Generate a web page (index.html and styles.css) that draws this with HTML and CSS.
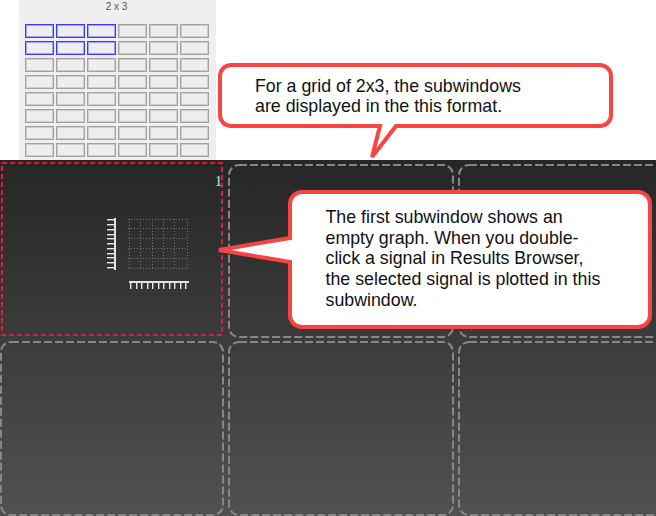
FILE: index.html
```html
<!DOCTYPE html>
<html>
<head>
<meta charset="utf-8">
<title>Subwindow grid</title>
<link rel="stylesheet" href="styles.css">
</head>
<body>
<div class="page">
  <section class="top">
    <div class="layout-panel">
      <div class="layout-title">2 x 3</div>
      <div class="cell-grid">
        <span class="cell sel"></span><span class="cell sel"></span><span class="cell sel"></span><span class="cell"></span><span class="cell"></span><span class="cell"></span>
        <span class="cell sel"></span><span class="cell sel"></span><span class="cell sel"></span><span class="cell"></span><span class="cell"></span><span class="cell"></span>
        <span class="cell"></span><span class="cell"></span><span class="cell"></span><span class="cell"></span><span class="cell"></span><span class="cell"></span>
        <span class="cell"></span><span class="cell"></span><span class="cell"></span><span class="cell"></span><span class="cell"></span><span class="cell"></span>
        <span class="cell"></span><span class="cell"></span><span class="cell"></span><span class="cell"></span><span class="cell"></span><span class="cell"></span>
        <span class="cell"></span><span class="cell"></span><span class="cell"></span><span class="cell"></span><span class="cell"></span><span class="cell"></span>
        <span class="cell"></span><span class="cell"></span><span class="cell"></span><span class="cell"></span><span class="cell"></span><span class="cell"></span>
        <span class="cell"></span><span class="cell"></span><span class="cell"></span><span class="cell"></span><span class="cell"></span><span class="cell"></span>
      </div>
    </div>
  </section>

  <section class="workspace">
    <div class="pane pane-active">
      <svg class="graph" width="84" height="74" viewBox="0 0 84 74">
        <g class="grid-dots">
          <path d="M21 2.5H81M21 11.5H81M21 21.5H81M21 31.5H81M21 41.5H81M21 51.5H81"/>
          <path d="M22.5 2V52M33.5 2V52M45.5 2V52M56.5 2V52M67.5 2V52M80.5 2V52"/>
        </g>
        <path class="axis-shadow" d="M0 3.5H7M0 8.5H7M0 13.5H7M0 18.5H7M0 22.5H7M0 27.5H7M0 32.5H7M0 37.5H7M0 41.5H7M0 46.5H7M0 51.5H7"/>
        <path class="axis" d="M0 2.5H7M0 7.5H7M0 12.5H7M0 17.5H7M0 21.5H7M0 26.5H7M0 31.5H7M0 36.5H7M0 40.5H7M0 45.5H7M0 50.5H7"/>
        <path class="axis-bar" d="M8 1V53"/>
        <path class="axis-bar" d="M22 65H82"/>
        <path class="axis-shadow" d="M24.5 66V72M30.5 66V72M35.5 66V72M41.5 66V72M46.5 66V72M52.5 66V72M57.5 66V72M63.5 66V72M68.5 66V72M74.5 66V72M79.5 66V72"/>
        <path class="axis" d="M23.5 66V72M29.5 66V72M34.5 66V72M40.5 66V72M45.5 66V72M51.5 66V72M56.5 66V72M62.5 66V72M67.5 66V72M73.5 66V72M78.5 66V72"/>
      </svg>
      <span class="pane-num">1</span>
    </div>
    <div class="pane">
      <svg class="pane-border" width="226" height="174"><rect x="1" y="1" width="224" height="172" rx="10"/></svg>
    </div>
    <div class="pane">
      <svg class="pane-border" width="226" height="174"><rect x="1" y="1" width="224" height="172" rx="10"/></svg>
    </div>
    <div class="pane">
      <svg class="pane-border" width="224" height="175"><rect x="1" y="1" width="222" height="173" rx="10"/></svg>
    </div>
    <div class="pane">
      <svg class="pane-border" width="226" height="175"><rect x="1" y="1" width="224" height="173" rx="10"/></svg>
    </div>
    <div class="pane">
      <svg class="pane-border" width="226" height="175"><rect x="1" y="1" width="224" height="173" rx="10"/></svg>
    </div>

    <svg class="selection" width="222" height="174"><rect x="1" y="1" width="220" height="172"/></svg>
  </section>

  <svg class="callouts" width="656" height="516" viewBox="0 0 656 516">
    <path d="M231 65H600A11 11 0 0 1 611 76V115A11 11 0 0 1 600 126H396L372 157L380 126H231A11 11 0 0 1 220 115V76A11 11 0 0 1 231 65Z"/>
    <path d="M302 192H638A12 12 0 0 1 650 204V315A12 12 0 0 1 638 327H302A12 12 0 0 1 290 315V262L219 250L290 238V204A12 12 0 0 1 302 192Z"/>
  </svg>

  <div class="callout-text callout-1">For a grid of 2x3, the subwindows<br>are displayed in the this format.</div>
  <div class="callout-text callout-2">The first subwindow shows an<br>empty graph. When you double-<br>click a signal in Results Browser,<br>the selected signal is plotted in this<br>subwindow.</div>
</div>
</body>
</html>
```

FILE: styles.css
```css
html, body {
  margin: 0;
  padding: 0;
  background: #ffffff;
  font-family: "Liberation Sans", Arial, sans-serif;
}

.page {
  position: relative;
  width: 656px;
  height: 516px;
  overflow: hidden;
}

/* ---------- layout picker ---------- */
.top {
  height: 160px;
  padding-left: 19px;
  box-sizing: border-box;
  display: flex;
}

.layout-panel {
  width: 197px;
  background: #efefef;
  padding-top: 1px;
  box-sizing: border-box;
}

.layout-title {
  font-size: 10px;
  line-height: 12px;
  color: #555555;
  text-align: center;
  padding-right: 2px;
}

.cell-grid {
  display: grid;
  grid-template-columns: repeat(6, 29px);
  grid-auto-rows: 14px;
  column-gap: 2px;
  row-gap: 3px;
  margin: 11px 0 0 6px;
}

.cell {
  display: block;
  box-sizing: border-box;
  border: 1px solid #a2a2a2;
  box-shadow: inset 0 0 0 1px #cdcdcd;
  background: #eeeeee;
}

.cell.sel {
  border-color: #3a3aff;
  box-shadow: inset 0 0 0 1px #a4a4ff;
}

/* ---------- workspace ---------- */
.workspace {
  position: relative;
  height: 356px;
  box-sizing: border-box;
  padding-top: 4px;
  overflow: hidden;
  display: grid;
  grid-template-columns: 224px 226px 226px;
  grid-template-rows: 174px 175px;
  column-gap: 4px;
  row-gap: 3px;
  background: linear-gradient(to bottom, #262626 0%, #515151 100%);
}

.pane {
  position: relative;
  min-width: 0;
}

.pane-border {
  display: block;
}

.pane-border rect {
  fill: none;
  stroke: #878787;
  stroke-width: 2;
  stroke-dasharray: 8 3;
}

.pane-active {
  box-sizing: border-box;
  padding: 53px 0 0 107px;
}

.graph {
  display: block;
}

.grid-dots path {
  fill: none;
  stroke: #757575;
  stroke-width: 1;
  stroke-dasharray: 1 2;
}

.axis {
  fill: none;
  stroke: #e6e6e6;
  stroke-width: 1;
}

.axis-shadow {
  fill: none;
  stroke: #7c7c7c;
  stroke-width: 1;
}

.axis-bar {
  fill: none;
  stroke: #e2e2e2;
  stroke-width: 2;
}

.pane-num {
  position: absolute;
  left: 215px;
  top: 10px;
  font-family: "Liberation Serif", "Times New Roman", serif;
  font-size: 14px;
  line-height: 16px;
  color: #e4e4e4;
}

.selection {
  position: absolute;
  left: 1px;
  top: 2px;
}

.selection rect {
  fill: none;
  stroke: #e21b3c;
  stroke-width: 2;
  stroke-dasharray: 5 3;
}

/* ---------- callouts ---------- */
.callouts {
  position: absolute;
  left: 0;
  top: 0;
  pointer-events: none;
}

.callouts path {
  fill: #ffffff;
  stroke: #f94444;
  stroke-width: 4;
}

.callout-text {
  position: absolute;
  font-size: 17.8px;
  color: #111111;
  white-space: nowrap;
}

.callout-1 {
  left: 255px;
  top: 75.5px;
  line-height: 20px;
}

.callout-2 {
  left: 325.5px;
  top: 207px;
  line-height: 20.7px;
}
```
